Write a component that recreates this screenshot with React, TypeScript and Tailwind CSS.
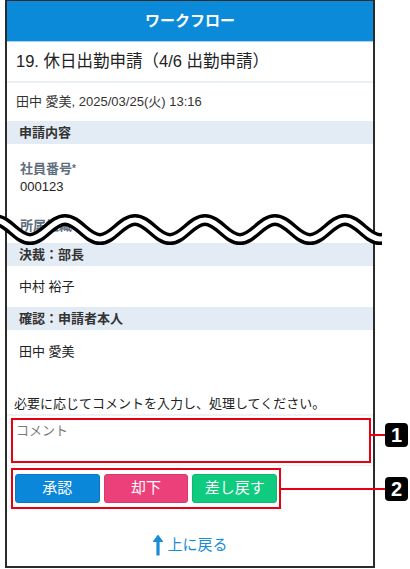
import React from 'react';

const font = { fontFamily: '"Liberation Sans", "Noto Sans CJK JP", sans-serif' };

function Band({ children }: { children: React.ReactNode }) {
  return (
    <div className="h-[23px] bg-[#e3ebf4] flex items-center pl-[12px] text-[13px] font-bold text-[#333]">
      {children}
    </div>
  );
}

function UpArrow() {
  return (
    <svg width="12" height="22" viewBox="0 0 12 22" className="mr-[3px]">
      <path d="M6 0.5 L11.5 8 L7.6 8 L7.6 21.5 L4.4 21.5 L4.4 8 L0.5 8 Z" fill="#1a8bd8" />
    </svg>
  );
}

// wave that marks the cut in the screen
function Wave() {
  const d =
    'M -40 29 C -27 29 -18 10 -5 10 S 17 29 30 29 S 52 10 65 10 S 87 29 100 29 S 122 10 135 10 S 157 29 170 29 S 192 10 205 10 S 227 29 240 29 S 262 10 275 10 S 297 29 310 29 S 332 10 345 10 S 367 29 380 29 S 402 10 415 10';
  return (
    <svg width="382" height="40" viewBox="0 0 382 40" className="absolute left-0 top-[210px]">
      <path d={d} fill="none" stroke="#000" strokeWidth="12" />
      <path d={d} fill="none" stroke="#fff" strokeWidth="5" />
    </svg>
  );
}

function Badge({ n, top }: { n: string; top: string }) {
  return (
    <div
      className={`absolute left-[385px] w-[23px] h-[24px] rounded-[4px] bg-black text-white font-bold text-[20px] flex items-center justify-center ${top}`}
    >
      {n}
    </div>
  );
}

export default function App() {
  return (
    <div className="relative w-[410px] h-[569px] bg-white overflow-hidden" style={font}>
      <div className="ml-[5px] w-[370px] h-[568px] border-x-2 border-t border-b-2 border-[#2b2b2b] flex flex-col">
        {/* header */}
        <div className="h-[40px] bg-[#0b8ad9] flex items-center justify-center text-white font-bold text-[15px]">
          ワークフロー
        </div>
        <div className="h-px bg-[#a6d3f3]" />

        <div className="h-[39px] flex items-center pl-[9px] text-[16.5px] text-[#222]">
          19. 休日出勤申請（4/6 出勤申請）
        </div>
        <div className="h-[2px] bg-[#eaf0f6]" />
        <div className="h-[38px] flex items-center pl-[9px] text-[13px] text-[#333]">
          田中 愛美, 2025/03/25(火) 13:16
        </div>

        <Band>申請内容</Band>
        <div className="pt-[16px] pb-[8px] pl-[13px] text-[13px]">
          <div className="leading-[18px] font-bold text-[#5f6f80]">
            社員番号<span className="text-[10px] align-top">*</span>
          </div>
          <div className="leading-[17px] text-[#222]">000123</div>
          <div className="mt-[22px] leading-[18px] font-bold text-[#5f6f80]">所属組織</div>
        </div>

        <Band>決裁：部長</Band>
        <div className="h-[41px] flex items-center pl-[12px] text-[13px] text-[#222]">中村 裕子</div>
        <Band>確認：申請者本人</Band>
        <div className="h-[44px] flex items-center pl-[12px] text-[13px] text-[#222]">田中 愛美</div>

        <div className="pt-[21px] pb-px pl-[7px] leading-[18px] text-[13px] text-[#222]">
          必要に応じてコメントを入力し、処理してください。
        </div>
        <div className="h-[2px] bg-[#eff1f4]" />

        {/* comment */}
        <div className="mt-[2px] ml-[4px] w-[360px] h-[45px] border-2 border-[#e60012] pl-[3px] pt-px text-[13px] text-[#7a7a7a]">
          コメント
        </div>
        <div className="mt-[2px] h-px bg-[#eceff2]" />

        {/* actions */}
        <div className="mt-[2px] ml-[4px] w-[270px] h-[41px] border-2 border-[#e60012] px-[2px] py-[4px] flex gap-[4px]">
          <button className="flex-1 h-[29px] rounded-[3px] bg-[#0b87d9] border border-[#0a78c2] text-white text-[15px]">
            承認
          </button>
          <button className="flex-1 h-[29px] rounded-[3px] bg-[#ec407a] border border-[#d63a6e] text-white text-[15px]">
            却下
          </button>
          <button className="flex-1 h-[29px] rounded-[3px] bg-[#0fcb80] border border-[#0db873] text-white text-[15px]">
            差し戻す
          </button>
        </div>

        <div className="pt-[25px] flex items-center justify-center text-[15px] text-[#1a8bd8]">
          <UpArrow />
          上に戻る
        </div>
      </div>

      <Wave />

      {/* callouts */}
      <div className="absolute left-[371px] top-[434px] w-[15px] h-[2px] bg-[#e60012]" />
      <Badge n="1" top="top-[423px]" />
      <div className="absolute left-[281px] top-[488px] w-[105px] h-[2px] bg-[#e60012]" />
      <Badge n="2" top="top-[477px]" />
    </div>
  );
}
